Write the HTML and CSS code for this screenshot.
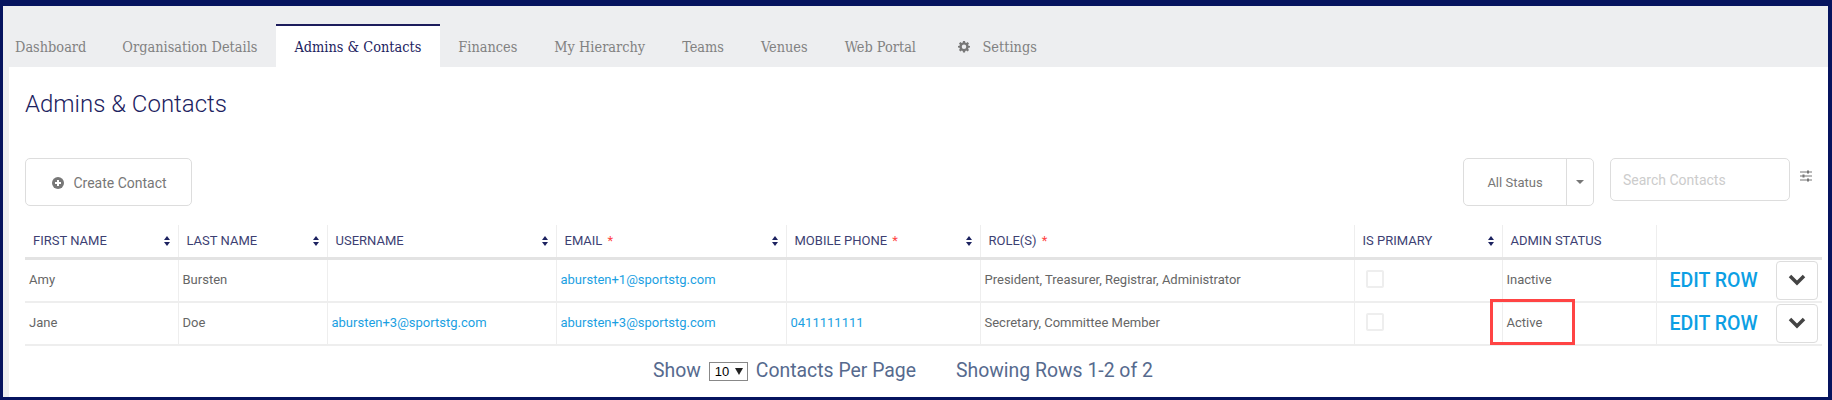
FILE: index.html
```html
<!DOCTYPE html>
<html lang="en">
<head>
    <meta charset="UTF-8">
    <title>Admins &amp; Contacts</title>
    <link rel="stylesheet" href="styles.css">
</head>
<body>

    <div class="frame">
        <ul class="tabs">
            <li class="tab">Dashboard</li>
            <li class="tab">Organisation Details</li>
            <li class="tab active">Admins &amp; Contacts</li>
            <li class="tab">Finances</li>
            <li class="tab">My Hierarchy</li>
            <li class="tab">Teams</li>
            <li class="tab">Venues</li>
            <li class="tab">Web Portal</li>
            <li class="tab tab-settings">
                <svg class="gear" viewBox="0 0 24 24"><path d="M10 1h4l.6 3.2 1.9.8L19.200 3.200 22 6l-1.800 2.700.8 1.900L24 11v3l-3 .6-.8 1.900 1.800 2.700-2.800 2.800-2.700-1.800-1.900.8L14 24h-4l-.6-3-1.900-.8-2.700 1.800L2 19.200l1.800-2.700-.8-1.900L0 14v-3l3-.4.8-1.900L2 6l2.800-2.800L7.500 5l1.900-.8zM12 8a4.500 4.500 0 1 0 0 9 4.500 4.500 0 0 0 0-9z" fill-rule="evenodd"/></svg>
                Settings
            </li>
        </ul>

        <div class="content">
            <h1>Admins &amp; Contacts</h1>

            <div class="toolbar">
                <button class="create-btn">
                    <svg class="plus" viewBox="0 0 12 12"><circle cx="6" cy="6" r="6"/><path d="M6 3v6M3 6h6" stroke="#fff" stroke-width="2"/></svg>
                    Create Contact
                </button>
                <div class="toolbar-right">
                    <div class="status-select">
                        <span class="status-label">All Status</span>
                        <span class="status-caret"></span>
                    </div>
                    <input class="search" type="text" placeholder="Search Contacts">
                    <svg class="filter-icon" viewBox="0 0 12 12"><path d="M0 2h12M0 6h12M0 10h12" stroke="#777" stroke-width="1"/><path d="M7 .5h2v3H7zM2.500 4.500h2v3h-2zM7 8.500h2v3H7z" fill="#777"/></svg>
                </div>
            </div>

            <table class="contacts">
                <colgroup>
                    <col class="c-first"><col class="c-last"><col class="c-user"><col class="c-email"><col class="c-phone"><col class="c-role"><col class="c-primary"><col class="c-status"><col>
                </colgroup>
                <thead>
                    <tr>
                        <th>First Name<svg class="sort" viewBox="0 0 6 10"><path d="M3 0l3 4H0zM3 10L0 6h6z"/></svg></th>
                        <th>Last Name<svg class="sort" viewBox="0 0 6 10"><path d="M3 0l3 4H0zM3 10L0 6h6z"/></svg></th>
                        <th>Username<svg class="sort" viewBox="0 0 6 10"><path d="M3 0l3 4H0zM3 10L0 6h6z"/></svg></th>
                        <th>Email <span class="req">*</span><svg class="sort" viewBox="0 0 6 10"><path d="M3 0l3 4H0zM3 10L0 6h6z"/></svg></th>
                        <th>Mobile Phone <span class="req">*</span><svg class="sort" viewBox="0 0 6 10"><path d="M3 0l3 4H0zM3 10L0 6h6z"/></svg></th>
                        <th>Role(s) <span class="req">*</span></th>
                        <th>Is Primary<svg class="sort" viewBox="0 0 6 10"><path d="M3 0l3 4H0zM3 10L0 6h6z"/></svg></th>
                        <th>Admin Status</th>
                        <th></th>
                    </tr>
                </thead>
                <tbody>
                    <tr>
                        <td>Amy</td>
                        <td>Bursten</td>
                        <td></td>
                        <td><a href="#">abursten+1@sportstg.com</a></td>
                        <td></td>
                        <td>President, Treasurer, Registrar, Administrator</td>
                        <td><span class="check"></span></td>
                        <td>Inactive</td>
                        <td>
                            <div class="row-actions">
                                <a class="edit-row" href="#">EDIT ROW</a>
                                <button class="expand"><svg viewBox="0 0 18 12"><path d="M2 2l7 7 7-7" fill="none" stroke="#444" stroke-width="3.500"/></svg></button>
                            </div>
                        </td>
                    </tr>
                    <tr>
                        <td>Jane</td>
                        <td>Doe</td>
                        <td><a href="#">abursten+3@sportstg.com</a></td>
                        <td><a href="#">abursten+3@sportstg.com</a></td>
                        <td><a href="#">0411111111</a></td>
                        <td>Secretary, Committee Member</td>
                        <td><span class="check"></span></td>
                        <td class="marked">Active<span class="highlight"></span></td>
                        <td>
                            <div class="row-actions">
                                <a class="edit-row" href="#">EDIT ROW</a>
                                <button class="expand"><svg viewBox="0 0 18 12"><path d="M2 2l7 7 7-7" fill="none" stroke="#444" stroke-width="3.500"/></svg></button>
                            </div>
                        </td>
                    </tr>
                </tbody>
            </table>

            <div class="pager">
                <span>Show</span>
                <label class="per-page-wrap"><select class="per-page"><option>10</option></select></label>
                <span>Contacts Per Page</span>
                <span class="rows-count">Showing Rows 1-2 of 2</span>
            </div>
        </div>
    </div>

</body>
</html>
```

FILE: styles.css
```css
* {
    box-sizing: border-box;
}

body {
    margin: 0;
    font-family: Roboto, Arial, sans-serif;
    background-color: #fff;
}

.frame {
    height: 400px;
    border-style: solid;
    border-color: #06145f;
    border-width: 6px 4px 3px 3px;
    background-color: #edeef0;
    display: flex;
    flex-direction: column;
    overflow: hidden;
}

/* Tabs */
.tabs {
    list-style: none;
    margin: 0;
    padding: 18px 0 0 0;
    height: 61px;
    display: flex;
    flex-shrink: 0;
}
.tab {
    font-family: "DejaVu Serif", serif;
    font-stretch: condensed;
    font-size: 14.4px;
    color: #818181;
    padding: 0 18.5px;
    display: flex;
    align-items: center;
    border-top: 2px solid transparent;
}
.tab:first-child {
    padding-left: 12px;
    padding-right: 17.5px;
}
.tab.active {
    background-color: #fff;
    color: #1c2260;
    border-top-color: #1c1c5c;
}
.tab-settings {
    padding-left: 24px;
}
.gear {
    width: 12px;
    height: 13px;
    fill: #777;
    margin-right: 12px;
}

/* Content */
.content {
    flex-grow: 1;
    background-color: #fff;
    margin-left: 6px;
    padding: 23px 6px 0 16px;
}
h1 {
    margin: 0 0 40px 0;
    font-size: 24px;
    line-height: 28px;
    font-weight: 300;
    color: #1c2260;
}

.toolbar {
    display: flex;
    justify-content: space-between;
    align-items: flex-start;
}
.toolbar-right {
    display: flex;
    align-items: flex-start;
}
.create-btn {
    width: 167px;
    height: 48px;
    padding: 2px 0 0 2px;
    background-color: #fff;
    border: 1px solid #ddd;
    border-radius: 5px;
    font-family: Roboto, Arial, sans-serif;
    font-size: 14px;
    color: #777;
    display: flex;
    align-items: center;
    justify-content: center;
}
.plus {
    width: 12px;
    height: 12px;
    fill: #777;
    margin-right: 9px;
}
.status-select {
    width: 131px;
    height: 48px;
    border: 1px solid #ddd;
    border-radius: 5px;
    display: flex;
    font-size: 13px;
    color: #777;
}
.status-label {
    width: 103px;
    display: flex;
    align-items: center;
    justify-content: center;
    border-right: 1px solid #ddd;
}
.status-caret {
    flex-grow: 1;
    display: flex;
    align-items: center;
    justify-content: center;
}
.status-caret:after {
    content: "";
    border-top: 4px solid #777;
    border-left: 4px solid transparent;
    border-right: 4px solid transparent;
}
.search {
    width: 180px;
    height: 43px;
    margin-left: 16px;
    border: 1px solid #ddd;
    border-radius: 5px;
    padding: 0 12px;
    font-family: Roboto, Arial, sans-serif;
    font-size: 14px;
    outline: none;
}
.search::placeholder {
    color: #ccc;
}
.filter-icon {
    width: 12px;
    height: 12px;
    margin: 12px 10px 0 10px;
}

/* Table */
.contacts {
    table-layout: fixed;
    width: 1797px;
    margin-top: 19px;
    border-collapse: collapse;
    font-size: 13px;
    color: #666;
}
.c-first { width: 153px; }
.c-last { width: 149px; }
.c-user { width: 229px; }
.c-email { width: 230px; }
.c-phone { width: 194px; }
.c-role { width: 374px; }
.c-primary { width: 148px; }
.c-status { width: 154px; }

.contacts th {
    position: relative;
    height: 33px;
    padding: 0 8px;
    text-align: left;
    font-weight: 400;
    font-size: 13px;
    text-transform: uppercase;
    color: #3d3f73;
    border-left: 1px solid #eee;
    border-bottom: 3px solid #e3e3e3;
}
.contacts th:first-child,
.contacts td:first-child {
    border-left: none;
}
.contacts td {
    height: 43.5px;
    padding: 0 4px 1px;
    border-left: 1px solid #eee;
    border-bottom: 2px solid #eee;
}
.contacts a {
    color: #1b9fe2;
    text-decoration: none;
}
.req {
    color: #f44;
    margin-left: 2px;
}
.sort {
    position: absolute;
    right: 8px;
    top: 11px;
    width: 6px;
    height: 10px;
    fill: #1c2260;
}
.check {
    display: block;
    width: 18px;
    height: 18px;
    margin: 0 0 2px 7px;
    border: 2px solid #eee;
    border-radius: 2px;
}
.marked {
    position: relative;
}
.highlight {
    position: absolute;
    left: -13px;
    top: -4px;
    width: 85px;
    height: 46px;
    border: 3px solid #f44;
}
.row-actions {
    display: flex;
    align-items: center;
    justify-content: space-between;
    padding: 1px 0 0 9px;
}
.contacts a.edit-row {
    font-size: 19.5px;
    font-weight: 500;
    color: #0c9fe4;
}
.expand {
    width: 42px;
    height: 39px;
    padding: 0;
    background-color: #fff;
    border: 1px solid #ddd;
    border-radius: 4px;
    display: flex;
    align-items: center;
    justify-content: center;
}
.expand svg {
    width: 18px;
    height: 12px;
}

/* Pager */
.pager {
    display: flex;
    align-items: center;
    height: 48px;
    padding-left: 628px;
    font-size: 19.4px;
    color: #566a8e;
}
.per-page-wrap {
    position: relative;
    display: block;
    margin: 2px 8px 0 8px;
    height: 19px;
}
.per-page-wrap:after {
    content: "";
    position: absolute;
    right: 5px;
    top: 6px;
    border-top: 7px solid #222;
    border-left: 4px solid transparent;
    border-right: 4px solid transparent;
}
.per-page {
    display: block;
    appearance: none;
    width: 39px;
    height: 19px;
    padding: 0 0 0 5px;
    border: 1px solid #888;
    border-radius: 0;
    font-family: Arial, sans-serif;
    font-size: 13px;
    color: #000;
    background-color: #fff;
}
.rows-count {
    margin-left: 40px;
}
```
